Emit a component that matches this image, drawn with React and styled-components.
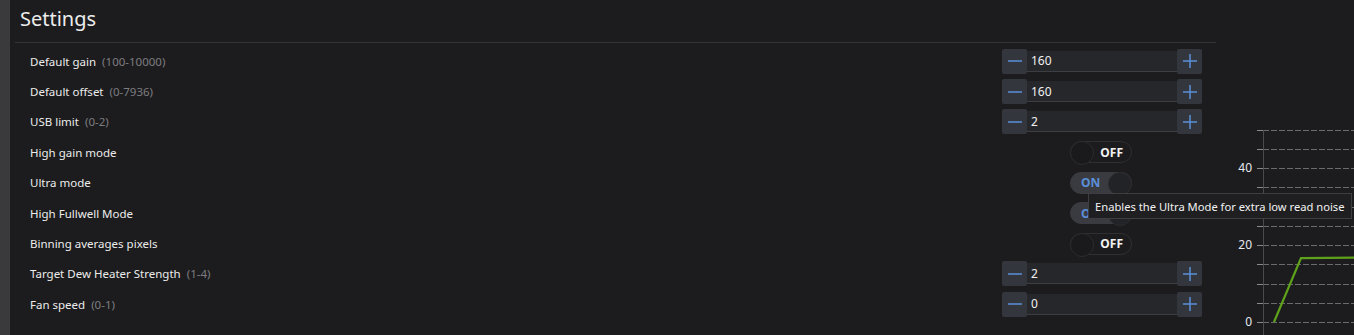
import React from 'react';
import styled, { createGlobalStyle } from 'styled-components';

const GlobalStyle = createGlobalStyle`
  html, body {
    margin: 0;
    padding: 0;
    background: #1c1c1e;
    overflow: hidden;
  }
  body {
    font-family: "Noto Sans", "Open Sans", sans-serif;
    color: #e6e6e6;
  }
`;

const Page = styled.div`
  position: relative;
  display: flex;
  height: 335px;
  width: 1354px;
  background: #1c1c1e;
`;

const Strip = styled.div`
  width: 10px;
  background: #3a3a3d;
`;

const Panel = styled.div`
  width: 1201px;
  padding-left: 5px;
  display: flex;
  flex-direction: column;
`;

const Header = styled.div`
  height: 42px;
  border-bottom: 1px solid #333336;
  padding-left: 5px;
  display: flex;
  align-items: center;
`;

const Title = styled.h1`
  margin: 0;
  font-size: 20px;
  font-weight: 400;
  color: #ececec;
  line-height: 1;
  padding-bottom: 4px;
`;

const List = styled.div`
  padding: 3px 14px 0 15px;
  display: flex;
  flex-direction: column;
`;

const Row = styled.div`
  height: 30.4px;
  display: grid;
  grid-template-columns: 1fr 200px;
  align-items: center;
`;

const Label = styled.div`
  font-size: 11.5px;
  color: #ececec;
  white-space: nowrap;
`;

const Range = styled.span`
  color: #7d7d80;
  margin-left: 6px;
`;

const Stepper = styled.div`
  display: flex;
  align-items: center;
  height: 25px;
`;

const StepButton = styled.div`
  width: 25px;
  height: 25px;
  background: #33363c;
  border-radius: 2px;
  display: flex;
  align-items: center;
  justify-content: center;
`;

const ValueBox = styled.div`
  flex: 1;
  height: 20px;
  background: #26272b;
  border-bottom: 1px solid #3d3e42;
  display: flex;
  align-items: center;
  padding-left: 4px;
  font-size: 12px;
  color: #f0f0f0;
`;

const ToggleWrap = styled.div`
  display: flex;
  justify-content: center;
  padding-right: 2px;
`;

const Toggle = styled.div`
  position: relative;
  width: 62px;
  height: 22px;
  border-radius: 12px;
  border: 1px solid ${p => (p.$on ? '#3a3b40' : '#2f2f32')};
  background: ${p => (p.$on ? '#3a3b40' : '#1c1c1e')};
  display: flex;
  align-items: center;
  justify-content: ${p => (p.$on ? 'flex-start' : 'flex-end')};
  padding: 0 8px 0 10px;
  box-sizing: border-box;
  font-size: 12px;
  font-weight: 700;
  color: ${p => (p.$on ? '#5b8fd9' : '#f2f2f2')};
`;

const Knob = styled.div`
  position: absolute;
  top: -1px;
  ${p => (p.$on ? 'right: -1px;' : 'left: -1px;')}
  width: 24px;
  height: 24px;
  border-radius: 50%;
  background: ${p => (p.$on ? '#222326' : '#1a1a1c')};
  border: 1px solid #2c2c2f;
  box-sizing: border-box;
`;

const ChartArea = styled.div`
  flex: 1;
`;

const Tooltip = styled.div`
  position: absolute;
  left: 1088px;
  top: 193px;
  height: 24px;
  padding: 0 6px 0 6px;
  background: #1f1f21;
  border: 1px solid #3e3e41;
  display: flex;
  align-items: center;
  font-size: 11.2px;
  color: #f2f2f2;
  white-space: nowrap;
`;

const Minus = () => (
  <svg width="16" height="16" viewBox="0 0 16 16">
    <line x1="1" y1="8" x2="15" y2="8" stroke="#5b8fd9" strokeWidth="1.5" />
  </svg>
);

const Plus = () => (
  <svg width="16" height="16" viewBox="0 0 16 16">
    <line x1="1" y1="8" x2="15" y2="8" stroke="#5b8fd9" strokeWidth="1.5" />
    <line x1="8" y1="1" x2="8" y2="15" stroke="#5b8fd9" strokeWidth="1.5" />
  </svg>
);

const settings = [
  { label: 'Default gain', range: '(100-10000)', value: '160' },
  { label: 'Default offset', range: '(0-7936)', value: '160' },
  { label: 'USB limit', range: '(0-2)', value: '2' },
  { label: 'High gain mode', toggle: false },
  { label: 'Ultra mode', toggle: true },
  { label: 'High Fullwell Mode', toggle: true },
  { label: 'Binning averages pixels', toggle: false },
  { label: 'Target Dew Heater Strength', range: '(1-4)', value: '2' },
  { label: 'Fan speed', range: '(0-1)', value: '0' },
];

const Chart = () => {
  const axisX = 47;
  const y0 = 322;
  const unit = 3.85;
  const grid = [];
  for (let v = 0; v <= 50; v += 5) grid.push(v);
  return (
    <svg width="138" height="335" viewBox="0 0 138 335">
      {grid.map(v => {
        const y = Math.round(y0 - v * unit) + 0.5;
        return (
          <g key={v}>
            <line x1={axisX} y1={y} x2="138" y2={y} stroke="#6b6b6e" strokeWidth="1" strokeDasharray="6 2" />
            <line x1={axisX - 6} y1={y} x2={axisX} y2={y} stroke="#8a8a8d" strokeWidth="1" />
          </g>
        );
      })}
      <line x1={axisX + 0.5} y1="130" x2={axisX + 0.5} y2="335" stroke="#4a4a4d" strokeWidth="1" />
      {[0, 20, 40].map(v => (
        <text
          key={v}
          x="36"
          y={y0 - v * unit + 4}
          textAnchor="end"
          fontSize="12"
          fontFamily="Noto Sans, sans-serif"
          fill="#e4e8f0"
        >
          {v}
        </text>
      ))}
      <polyline
        points={`58,${y0} 85,${y0 - 16.6 * unit} 138,${y0 - 16.7 * unit}`}
        fill="none"
        stroke="#5ea11a"
        strokeWidth="2.2"
      />
    </svg>
  );
};

const App = () => (
  <>
    <GlobalStyle />
    <Page>
      <Strip />
      <Panel>
        <Header>
          <Title>Settings</Title>
        </Header>
        <List>
          {settings.map(s => (
            <Row key={s.label}>
              <Label>
                {s.label}
                {s.range && <Range>{s.range}</Range>}
              </Label>
              {s.toggle === undefined ? (
                <Stepper>
                  <StepButton><Minus /></StepButton>
                  <ValueBox>{s.value}</ValueBox>
                  <StepButton><Plus /></StepButton>
                </Stepper>
              ) : (
                <ToggleWrap>
                  <Toggle $on={s.toggle}>
                    <Knob $on={s.toggle} />
                    {s.toggle ? 'ON' : 'OFF'}
                  </Toggle>
                </ToggleWrap>
              )}
            </Row>
          ))}
        </List>
      </Panel>
      <ChartArea>
        <Chart />
      </ChartArea>
      <Tooltip>Enables the Ultra Mode for extra low read noise</Tooltip>
    </Page>
  </>
);

export default App;
